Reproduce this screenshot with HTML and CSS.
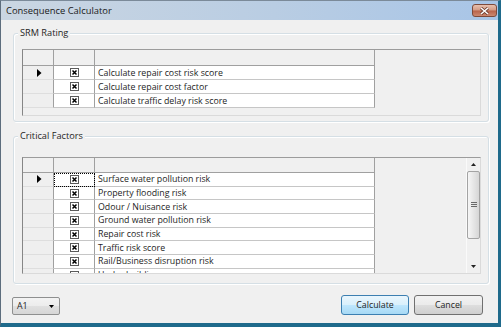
FILE: index.html
```html
<!DOCTYPE html>
<html lang="en">

<head>
  <meta charset="UTF-8">
  <title>Consequence Calculator</title>
  <link rel="stylesheet" href="styles.css">
</head>

<body>
  <div class="window">
    <div class="titlebar">
      <span class="title">Consequence Calculator</span>
      <div class="close-btn">
        <svg width="11" height="8" viewBox="0 0 11 8">
          <path d="M2 1 L9 7 M9 1 L2 7" stroke="#6b3a2c" stroke-width="3" />
          <path d="M2 1 L9 7 M9 1 L2 7" stroke="#fff" stroke-width="1.6" />
        </svg>
      </div>
    </div>

    <div class="client">
      <div class="group group-srm">
        <span class="group-label">SRM Rating</span>
        <div class="grid">
          <div class="rows">
            <div class="row head">
              <div class="cell rh"></div>
              <div class="cell chk"></div>
              <div class="cell txt"></div>
            </div>
            <div class="row">
              <div class="cell rh"><svg class="arrow" width="5" height="8" viewBox="0 0 5 8"><path d="M0 0 L4.5 4 L0 8 Z" fill="#000" /></svg></div>
              <div class="cell chk"><svg width="9" height="9" viewBox="0 0 9 9"><rect x="0.5" y="0.5" width="8" height="8" fill="#fff" stroke="#5a5a5a" /><path d="M2.5 2.5 L6.5 6.5 M6.5 2.5 L2.5 6.5" stroke="#000" stroke-width="1.5" /></svg></div>
              <div class="cell txt">Calculate repair cost risk score</div>
            </div>
            <div class="row">
              <div class="cell rh"></div>
              <div class="cell chk"><svg width="9" height="9" viewBox="0 0 9 9"><rect x="0.5" y="0.5" width="8" height="8" fill="#fff" stroke="#5a5a5a" /><path d="M2.5 2.5 L6.5 6.5 M6.5 2.5 L2.5 6.5" stroke="#000" stroke-width="1.5" /></svg></div>
              <div class="cell txt">Calculate repair cost factor</div>
            </div>
            <div class="row">
              <div class="cell rh"></div>
              <div class="cell chk"><svg width="9" height="9" viewBox="0 0 9 9"><rect x="0.5" y="0.5" width="8" height="8" fill="#fff" stroke="#5a5a5a" /><path d="M2.5 2.5 L6.5 6.5 M6.5 2.5 L2.5 6.5" stroke="#000" stroke-width="1.5" /></svg></div>
              <div class="cell txt">Calculate traffic delay risk score</div>
            </div>
          </div>
        </div>
      </div>

      <div class="group group-critical">
        <span class="group-label">Critical Factors</span>
        <div class="grid grid-dense">
          <div class="rows">
            <div class="row head">
              <div class="cell rh"></div>
              <div class="cell chk"></div>
              <div class="cell txt"></div>
            </div>
            <div class="row">
              <div class="cell rh"><svg class="arrow" width="5" height="8" viewBox="0 0 5 8"><path d="M0 0 L4.5 4 L0 8 Z" fill="#000" /></svg></div>
              <div class="cell chk focused"><svg width="9" height="9" viewBox="0 0 9 9"><rect x="0.5" y="0.5" width="8" height="8" fill="#fff" stroke="#5a5a5a" /><path d="M2.5 2.5 L6.5 6.5 M6.5 2.5 L2.5 6.5" stroke="#000" stroke-width="1.5" /></svg></div>
              <div class="cell txt">Surface water pollution risk</div>
            </div>
            <div class="row">
              <div class="cell rh"></div>
              <div class="cell chk"><svg width="9" height="9" viewBox="0 0 9 9"><rect x="0.5" y="0.5" width="8" height="8" fill="#fff" stroke="#5a5a5a" /><path d="M2.5 2.5 L6.5 6.5 M6.5 2.5 L2.5 6.5" stroke="#000" stroke-width="1.5" /></svg></div>
              <div class="cell txt">Property flooding risk</div>
            </div>
            <div class="row">
              <div class="cell rh"></div>
              <div class="cell chk"><svg width="9" height="9" viewBox="0 0 9 9"><rect x="0.5" y="0.5" width="8" height="8" fill="#fff" stroke="#5a5a5a" /><path d="M2.5 2.5 L6.5 6.5 M6.5 2.5 L2.5 6.5" stroke="#000" stroke-width="1.5" /></svg></div>
              <div class="cell txt">Odour / Nuisance risk</div>
            </div>
            <div class="row">
              <div class="cell rh"></div>
              <div class="cell chk"><svg width="9" height="9" viewBox="0 0 9 9"><rect x="0.5" y="0.5" width="8" height="8" fill="#fff" stroke="#5a5a5a" /><path d="M2.5 2.5 L6.5 6.5 M6.5 2.5 L2.5 6.5" stroke="#000" stroke-width="1.5" /></svg></div>
              <div class="cell txt">Ground water pollution risk</div>
            </div>
            <div class="row">
              <div class="cell rh"></div>
              <div class="cell chk"><svg width="9" height="9" viewBox="0 0 9 9"><rect x="0.5" y="0.5" width="8" height="8" fill="#fff" stroke="#5a5a5a" /><path d="M2.5 2.5 L6.5 6.5 M6.5 2.5 L2.5 6.5" stroke="#000" stroke-width="1.5" /></svg></div>
              <div class="cell txt">Repair cost risk</div>
            </div>
            <div class="row">
              <div class="cell rh"></div>
              <div class="cell chk"><svg width="9" height="9" viewBox="0 0 9 9"><rect x="0.5" y="0.5" width="8" height="8" fill="#fff" stroke="#5a5a5a" /><path d="M2.5 2.5 L6.5 6.5 M6.5 2.5 L2.5 6.5" stroke="#000" stroke-width="1.5" /></svg></div>
              <div class="cell txt">Traffic risk score</div>
            </div>
            <div class="row">
              <div class="cell rh"></div>
              <div class="cell chk"><svg width="9" height="9" viewBox="0 0 9 9"><rect x="0.5" y="0.5" width="8" height="8" fill="#fff" stroke="#5a5a5a" /><path d="M2.5 2.5 L6.5 6.5 M6.5 2.5 L2.5 6.5" stroke="#000" stroke-width="1.5" /></svg></div>
              <div class="cell txt">Rail/Business disruption risk</div>
            </div>
            <div class="row">
              <div class="cell rh"></div>
              <div class="cell chk"><svg width="9" height="9" viewBox="0 0 9 9"><rect x="0.5" y="0.5" width="8" height="8" fill="#fff" stroke="#5a5a5a" /><path d="M2.5 2.5 L6.5 6.5 M6.5 2.5 L2.5 6.5" stroke="#000" stroke-width="1.5" /></svg></div>
              <div class="cell txt">Under building</div>
            </div>
          </div>

          <div class="vscroll">
            <div class="sb-btn">
              <svg width="5" height="3" viewBox="0 0 5 3"><path d="M2.5 0 L5 3 L0 3 Z" fill="#222" /></svg>
            </div>
            <div class="sb-thumb">
              <svg width="6" height="6" viewBox="0 0 6 6"><path d="M0 0.5 H6 M0 2.5 H6 M0 4.5 H6" stroke="#6a6a6a" /></svg>
            </div>
            <div class="sb-track"></div>
            <div class="sb-btn">
              <svg width="5" height="3" viewBox="0 0 5 3"><path d="M0 0 L5 0 L2.5 3 Z" fill="#222" /></svg>
            </div>
          </div>
        </div>
      </div>

      <div class="footer">
        <div class="combo">
          <span>A1</span>
          <svg width="5" height="3" viewBox="0 0 5 3"><path d="M0 0 L5 0 L2.5 3 Z" fill="#000" /></svg>
        </div>
        <div class="buttons">
          <button class="btn btn-primary">Calculate</button>
          <button class="btn btn-cancel">Cancel</button>
        </div>
      </div>
    </div>
  </div>
</body>

</html>
```

FILE: styles.css
```css
body {
  margin: 0;
  background-color: #ffffff;
  font-family: 'Open Sans', 'Noto Sans', sans-serif;
  font-size: 8.8px;
  color: #1e1e1e;
}

.window {
  width: 501px;
  height: 327px;
  box-sizing: border-box;
  display: flex;
  flex-direction: column;
  background-color: #f0f0f0;
  border-left: 1px solid #5d6d7d;
  border-top: 1px solid #7b8a99;
  border-right: 3px solid #1f6a8b;
  border-bottom: 4px solid #1f6a8b;
}

.titlebar {
  height: 19px;
  flex: none;
  display: flex;
  align-items: center;
  justify-content: space-between;
  padding-left: 5px;
  background: linear-gradient(to right, #cad6e2, #b9cde3 55%, #a8c5e7);
}

.title {
  font-size: 9.4px;
  color: #1a1a1a;
}

.close-btn {
  width: 25px;
  height: 13px;
  box-sizing: border-box;
  margin-right: 1px;
  display: flex;
  align-items: center;
  justify-content: center;
  border: 1px solid #7e4a3a;
  border-radius: 3px;
  background: linear-gradient(#e8c0ae, #d39a84 48%, #b8624a 52%, #cc8870);
}

.client {
  flex: 1;
  display: flex;
  flex-direction: column;
  padding: 13px 9px 8px 12px;
}

.group {
  position: relative;
  box-sizing: border-box;
  border: 1px solid #d5dfe5;
  border-radius: 3px;
  box-shadow: inset 1px 1px 0 #ffffff, 1px 1px 0 #ffffff;
}

.group-label {
  position: absolute;
  left: 4px;
  top: -7px;
  padding: 0 2px;
  line-height: 12px;
  font-size: 9.2px;
  background-color: #f0f0f0;
}

.group-srm {
  height: 89px;
  padding: 15px 7px 5px 8px;
}

.group-critical {
  height: 148px;
  margin-top: 14px;
  padding: 20px 7px 9px 8px;
}

.grid {
  height: 100%;
  box-sizing: border-box;
  display: flex;
  overflow: hidden;
  background-color: #f0f0f0;
  border: 1px solid;
  border-color: #9c9c9c #dadada #dadada #868686;
}

.rows {
  flex: 1;
  overflow: hidden;
}

.row {
  display: flex;
  height: 14px;
}

.row.head {
  height: 16px;
}

.grid-dense .row {
  height: 13.7px;
}

.grid-dense .row.head {
  height: 15px;
}

.cell {
  box-sizing: border-box;
  display: flex;
  align-items: center;
  border-right: 1px solid #a0a0a0;
  border-bottom: 1px solid #c6c6c6;
}

.rh {
  width: 31px;
  justify-content: center;
  background-color: #efefef;
  border-bottom-color: #dedede;
}

.chk {
  width: 41px;
  justify-content: center;
  background-color: #ffffff;
}

.txt {
  width: 280px;
  padding-left: 3px;
  white-space: nowrap;
  background-color: #ffffff;
}

.head .cell {
  background-color: #f0f0f0;
  border-bottom-color: #a0a0a0;
}

.focused {
  outline: 1px dotted #000000;
  outline-offset: -1px;
}

.arrow {
  margin-left: 2px;
}

.vscroll {
  width: 14px;
  flex: none;
  box-sizing: border-box;
  display: flex;
  flex-direction: column;
  border-left: 1px solid #fafafa;
}

.sb-btn {
  height: 13px;
  display: flex;
  align-items: center;
  justify-content: center;
}

.sb-thumb {
  height: 68px;
  box-sizing: border-box;
  display: flex;
  align-items: center;
  justify-content: center;
  border: 1px solid #a3a3a3;
  border-radius: 2px;
  background: linear-gradient(to right, #f6f6f6, #e6e6e6 50%, #d6d6d6);
}

.sb-track {
  flex: 1;
}

.footer {
  margin-top: 11px;
  display: flex;
  justify-content: space-between;
  align-items: flex-start;
  padding-right: 6px;
}

.combo {
  width: 48px;
  height: 18px;
  box-sizing: border-box;
  margin: 2px 0 0 -1px;
  padding: 0 5px 0 4px;
  display: flex;
  align-items: center;
  justify-content: space-between;
  border: 1px solid #8e8f8f;
  border-radius: 2px;
  background: linear-gradient(#f3f3f3, #ececec 50%, #e0e0e0 50%, #d6d6d6);
}

.buttons {
  display: flex;
  gap: 5px;
}

.btn {
  height: 20px;
  box-sizing: border-box;
  padding: 0;
  font: inherit;
  color: #1e1e1e;
  border: 1px solid #707070;
  border-radius: 3px;
  background: linear-gradient(#f2f2f2, #ebebeb 48%, #dddddd 52%, #cfcfcf);
}

.btn-primary {
  width: 68px;
  border-color: #3c7fb1;
  background: linear-gradient(#eaf6fd, #d9f0fc 48%, #bee6fd 52%, #a7d9f5);
}

.btn-cancel {
  width: 69px;
}
```
